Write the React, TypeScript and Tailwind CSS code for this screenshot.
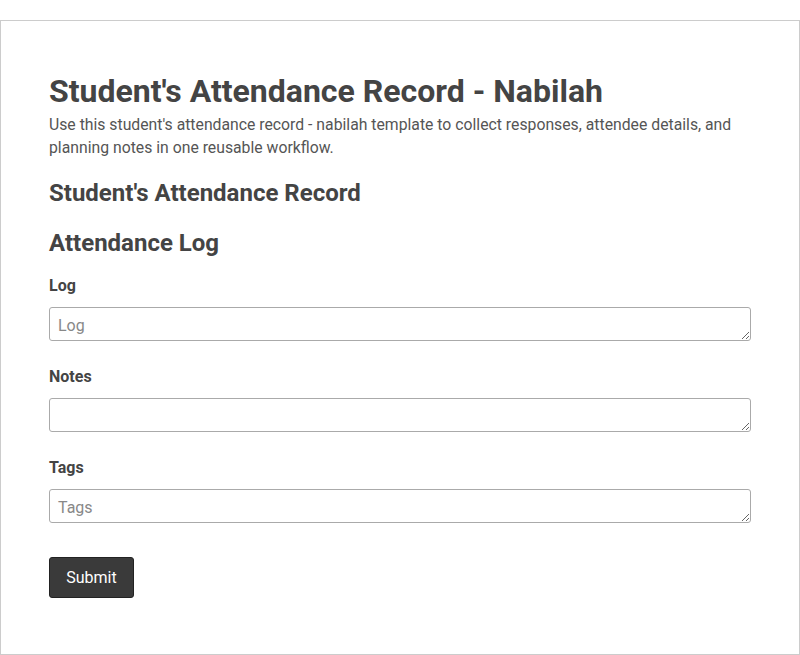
const FIELDS = [
  { label: 'Log', placeholder: 'Log' },
  { label: 'Notes', placeholder: '' },
  { label: 'Tags', placeholder: 'Tags' },
]

export default function App() {
  return (
    <div className="bg-white pt-5 font-['Roboto',sans-serif] text-[#444]">
      <div className="border border-[#ccc] px-12 pt-[51px] pb-14">
        <h1 className="text-[32px] font-bold leading-[38px]">Student's Attendance Record - Nabilah</h1>
        <p className="mt-[3px] text-[15.77px] leading-[23px] text-[#555]">
          Use this student's attendance record - nabilah template to collect responses, attendee details, and
          planning notes in one reusable workflow.
        </p>
        <h2 className="mt-5 text-2xl font-bold leading-[29px]">Student's Attendance Record</h2>
        <form className="mt-[21px]">
          <h3 className="text-2xl font-bold leading-[29px]">Attendance Log</h3>
          <div className="mt-[18px] flex flex-col gap-[26px]">
            {FIELDS.map(f => (
              <div key={f.label}>
                <label className="block text-base font-bold leading-[19px]">{f.label}</label>
                <textarea
                  rows={1}
                  placeholder={f.placeholder}
                  className="mt-3 block h-[34px] w-full rounded-[3px] border border-[#aaa] px-2 pt-[7px] pb-0 text-base leading-[22px] placeholder:text-[#888]"
                />
              </div>
            ))}
          </div>
          <button type="button"
            className="mt-[34px] h-[41px] w-[85px] rounded-[3px] border border-[#222] bg-[#3a3a3a] text-base text-white">
            Submit
          </button>
        </form>
      </div>
    </div>
  )
}
